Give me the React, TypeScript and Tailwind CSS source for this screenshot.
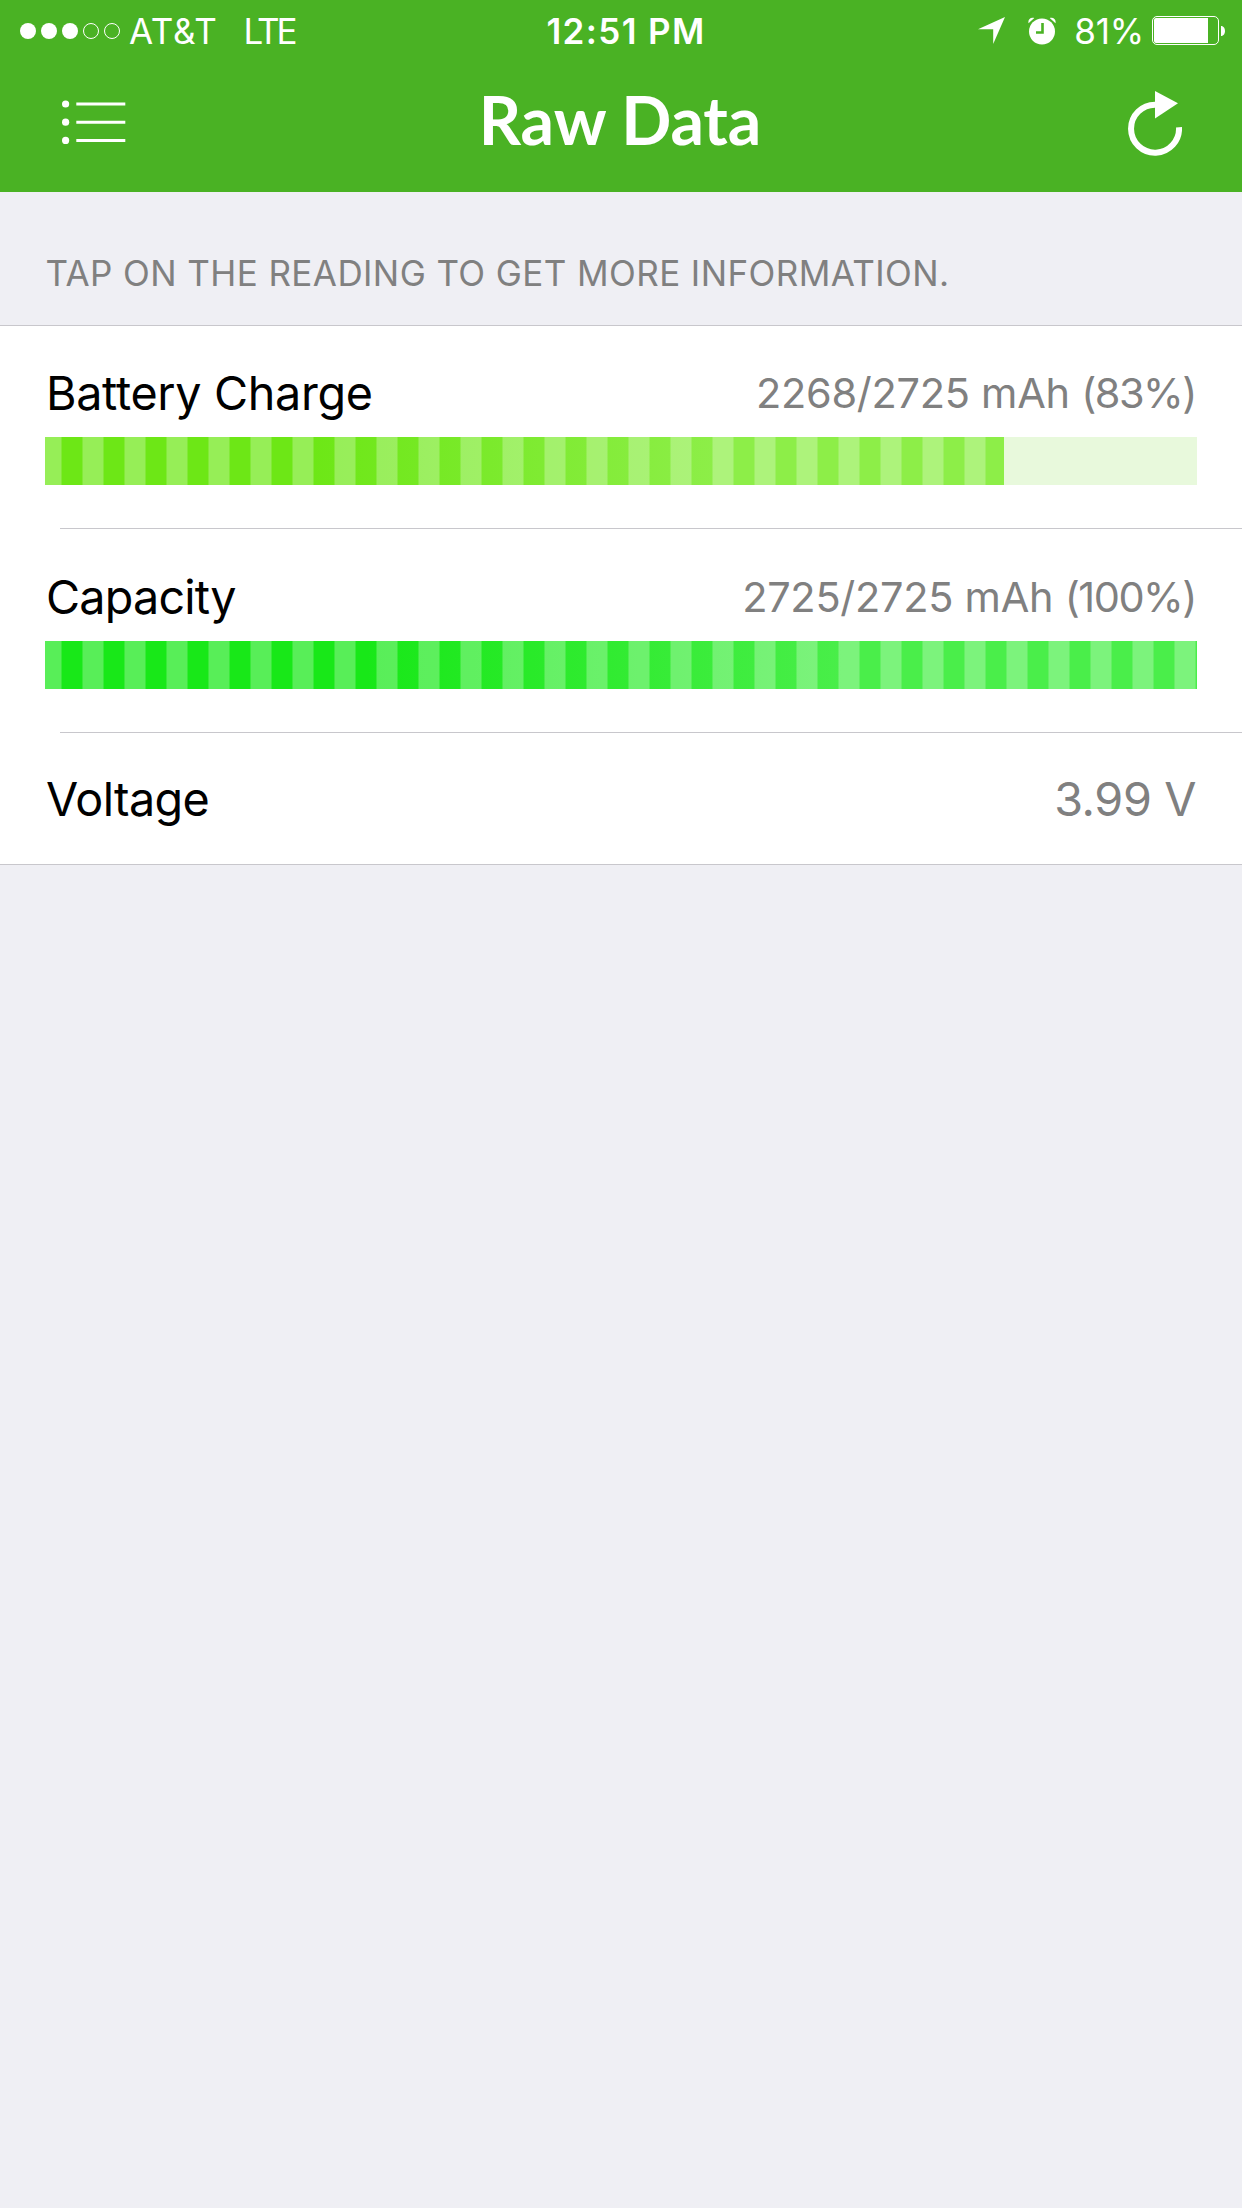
import React from 'react';

type Reading = {
  label: string;
  amount: string;
  percent: number;
  width: number;
  fill: string;
  tracking: string;
};

const readings: Reading[] = [
  {
    label: 'Battery Charge',
    amount: '2268/2725 mAh',
    percent: 83,
    width: 83.25,
    fill: 'bg-[linear-gradient(90deg,#6de716_28%,#8dee48_70%)]',
    tracking: 'tracking-[-0.33px]',
  },
  {
    label: 'Capacity',
    amount: '2725/2725 mAh',
    percent: 100,
    width: 100,
    fill: 'bg-[linear-gradient(90deg,#18e818_28%,#4aee4a_70%)]',
    tracking: 'tracking-[-0.8px]',
  },
];

const SignalDots = () => (
  <svg width="100" height="16" viewBox="0 0 100 16" className="shrink-0">
    {[8, 29, 50].map((cx) => (
      <circle key={cx} cx={cx} cy="8" r="8" fill="#fff" />
    ))}
    {[71, 92].map((cx) => (
      <circle key={cx} cx={cx} cy="8" r="7.5" fill="none" stroke="#fff" />
    ))}
  </svg>
);

const LocationIcon = () => (
  <svg width="27" height="27" viewBox="0 0 27 27" fill="#fff" className="shrink-0">
    <path d="M0 12.2 27 0 15.2 27V12.2z" />
  </svg>
);

const AlarmIcon = () => (
  <svg width="28" height="28" viewBox="0 0 28 28" className="shrink-0">
    <circle cx="14" cy="14.5" r="13" fill="#fff" />
    <path d="M14.5 6v9.5H8" fill="none" stroke="#4ab224" strokeWidth="2.6" />
    <path d="M.5 6.2C-.3 2.6 2.6-.2 6.3 1z M27.5 6.2C28.3 2.6 25.4-.2 21.7 1z" fill="#fff" />
  </svg>
);

const BatteryIcon = () => (
  <svg width="74" height="29" viewBox="0 0 74 29" className="shrink-0">
    <rect x=".5" y=".5" width="66" height="28" rx="4.5" fill="none" stroke="#fff" />
    <path d="M4 2h52v25H4a2 2 0 0 1-2-2V4a2 2 0 0 1 2-2z" fill="#fff" />
    <path d="M69 10c5.3 0 5.3 10 0 10z" fill="#fff" />
  </svg>
);

const ListIcon = () => (
  <svg width="64" height="45" viewBox="0 0 64 45">
    {[4, 22.2, 40.4].map((cy) => (
      <g key={cy}>
        <circle cx="3.6" cy={cy} r="3.6" fill="#fff" />
        <path d={`M14.3 ${cy}h49`} stroke="#fff" strokeWidth="3" />
      </g>
    ))}
  </svg>
);

const RefreshIcon = () => (
  <svg width="54" height="65" viewBox="0 0 54 65">
    <path d="M51 36.2A24 24 0 1 1 27.5 13.7" fill="none" stroke="#fff" strokeWidth="6" />
    <path d="M27 0 50 12.2 27 27.5z" fill="#fff" />
  </svg>
);

const StatusBar = () => (
  <div className="grid h-15 grid-cols-[1fr_auto_1fr] items-center pl-5 pr-4 text-[35px] leading-[60px]">
    <div className="flex items-center">
      <SignalDots />
      <span className="ml-[9px] pt-px tracking-[0.7px]">AT&amp;T</span>
      <span className="ml-[26px] pt-px tracking-[-3px]">LTE</span>
    </div>
    <span className="ml-[6px] pt-px font-semibold tracking-[1.35px]">12:51 PM</span>
    <div className="flex items-center justify-end">
      <LocationIcon />
      <span className="ml-[23px]">
        <AlarmIcon />
      </span>
      <span className="ml-[18px] mr-[8px] pt-px tracking-[-0.2px]">81%</span>
      <BatteryIcon />
    </div>
  </div>
);

const NavBar = () => (
  <div className="grid h-[132px] grid-cols-[1fr_auto_1fr] items-start pl-[62px] pr-[60px]">
    <button className="mt-10 justify-self-start" aria-label="Menu">
      <ListIcon />
    </button>
    <h1 className="mr-[4px] mt-5 font-[Lato] text-[66px] font-bold leading-[80px] tracking-[-0.1px]">
      Raw Data
    </h1>
    <button className="mt-[31px] justify-self-end" aria-label="Refresh">
      <RefreshIcon />
    </button>
  </div>
);

const ReadingRow = ({ label, amount, percent, width, fill, tracking }: Reading) => (
  <div className="flex h-[204px] flex-col">
    <div className="flex justify-between pl-[46px] pr-[46px] pt-[38px] leading-[60px]">
      <span className={`text-[46.7px] text-black ${tracking}`}>{label}</span>
      <span className="text-[41.5px] tracking-[-0.28px] text-[#808080]">
        {amount} <span className="tracking-[-1.5px]">({percent}%)</span>
      </span>
    </div>
    <div className="mx-[45px] mt-[14px] h-12 bg-[#e8f9dc]">
      <div className={`h-full ${fill}`} style={{ width: `${width}%` }}>
        {/* light stripes over the fill, softened by a pixel at each edge */}
        <div className="h-full bg-[linear-gradient(90deg,rgba(255,255,255,0.28)_20px,rgba(255,255,255,0.14)_20px_21px,transparent_21px_41px,rgba(255,255,255,0.14)_41px)] bg-[position:-4px_0] bg-[size:42px_100%]" />
      </div>
    </div>
    <div className="ml-[60px] mt-auto border-t border-[#c8c7cc]" />
  </div>
);

const App: React.FC = () => {
  return (
    <div className="min-h-[2208px] w-[1242px] bg-[#efeff4] font-[Inter,sans-serif]">
      <header className="h-48 bg-[#4ab224] text-white">
        <StatusBar />
        <NavBar />
      </header>

      <p className="h-[133px] pl-[45.5px] pt-[51px] text-[35px] leading-[60px] tracking-[0.41px] text-[#808080]">
        TAP ON THE READING TO GET MORE INFORMATION.
      </p>

      <section className="border-y border-[#c8c7cc] bg-white">
        <div className="-mt-px">
          {readings.map((r) => (
            <ReadingRow key={r.label} {...r} />
          ))}
        </div>
        <div className="flex h-[131px] justify-between pl-[46px] pr-[46px] pt-9 text-[46.7px] leading-[60px]">
          <span className="tracking-[-0.6px] text-black">Voltage</span>
          <span className="tracking-[-0.4px] text-[#808080]">3.99 V</span>
        </div>
      </section>
    </div>
  );
};

export default App;
